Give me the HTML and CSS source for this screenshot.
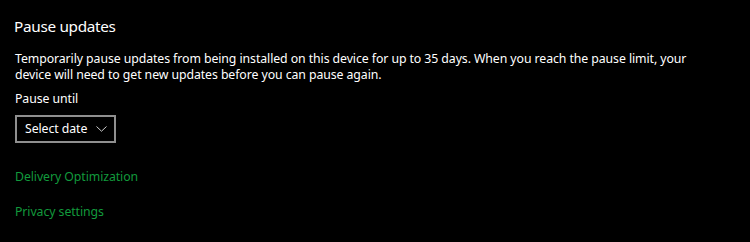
FILE: index.html
```html
<!DOCTYPE html>
<html>
<head>
<meta charset="utf-8">
<link rel="stylesheet" href="styles.css">
</head>
<body>
<main class="page">
  <h1 class="title">Pause updates</h1>
  <p class="desc">Temporarily pause updates from being installed on this device for up to 35 days. When you reach the pause limit, your device will need to get new updates before you can pause again.</p>
  <div class="label">Pause until</div>
  <button class="select"><span class="select-text">Select date</span>
    <svg class="chev" width="11" height="6" viewBox="0 0 11 6"><path d="M0.5 0.5 L5.5 5.2 L10.5 0.5" fill="none" stroke="#cfcfcf" stroke-width="1"/></svg>
  </button>
  <a class="link first" href="#">Delivery Optimization</a>
  <a class="link" href="#">Privacy settings</a>
</main>
</body>
</html>
```
FILE: styles.css
```css
html, body {
  margin: 0;
  background: #000;
}
body {
  width: 750px;
  height: 242px;
  overflow: hidden;
  font-family: "Noto Sans", "Open Sans", sans-serif;
  color: #fff;
}
.page {
  padding: 16px 15px 0 15px;
  display: flex;
  flex-direction: column;
  align-items: flex-start;
}
.title {
  margin: 0 0 0 -1px;
  font-size: 15.3px;
  letter-spacing: -0.3px;
  font-weight: 400;
  line-height: 20px;
}
.desc {
  margin: 15px 0 0 0;
  font-size: 12.3px;
  letter-spacing: -0.08px;
  line-height: 16px;
  width: 690px;
}
.label {
  margin-top: 8px;
  font-size: 12.3px;
  letter-spacing: -0.08px;
  line-height: 16px;
}
.select {
  margin-top: 8px;
  box-sizing: border-box;
  width: 101px;
  height: 28px;
  border: 2px solid #8f8f8f;
  background: #000;
  color: #fff;
  font-family: inherit;
  font-size: 12.3px;
  letter-spacing: -0.08px;
  padding: 0 0 0 8px;
  display: flex;
  align-items: center;
  white-space: nowrap;
}
.select-text {
  line-height: 16px;
}
.chev {
  display: block;
  margin-left: auto;
  margin-right: 7px;
}
.link {
  color: #129a3c;
  text-decoration: none;
  font-size: 12.3px;
  letter-spacing: -0.08px;
  line-height: 16px;
  margin-top: 19px;
}
.link.first {
  margin-top: 26px;
}
```
